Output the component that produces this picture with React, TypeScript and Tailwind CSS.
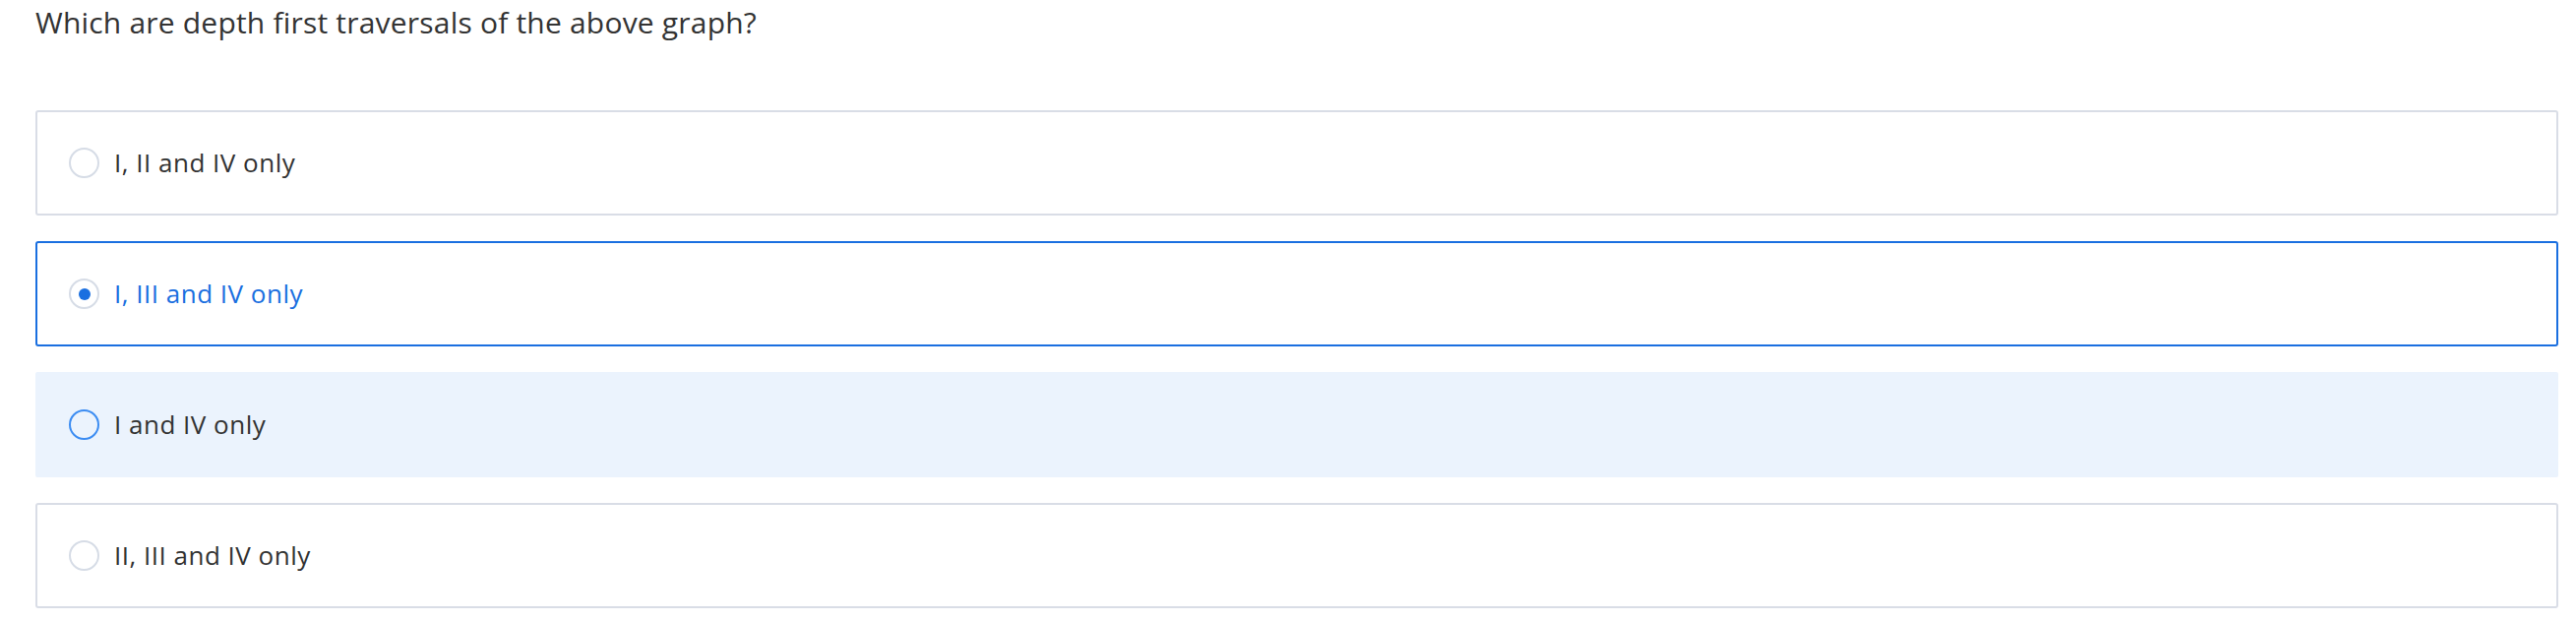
import { useState } from "react";

type Option = { id: number; label: string };

const options: Option[] = [
  { id: 1, label: "I, II and IV only" },
  { id: 2, label: "I, III and IV only" },
  { id: 3, label: "I and IV only" },
  { id: 4, label: "II, III and IV only" },
];

function Radio({ checked, hovered }: { checked: boolean; hovered: boolean }) {
  if (checked) {
    return (
      <span className="flex size-[31px] shrink-0 items-center justify-center rounded-full border-2 border-[#d6dce6] bg-white">
        <span className="size-[12px] rounded-full bg-[#1a6fe0]" />
      </span>
    );
  }
  return (
    <span
      className={
        hovered
          ? "size-[31px] shrink-0 rounded-full border-[2.5px] border-[#3b8cf2] bg-transparent"
          : "size-[31px] shrink-0 rounded-full border-2 border-[#d6dce6] bg-white"
      }
    />
  );
}

export default function App() {
  const [selected, setSelected] = useState(2);
  const hovered = 3;

  return (
    <div className="min-h-[632px] bg-white pl-[36px] pr-[18px] pt-[3px] font-['Open_Sans',sans-serif]">
      <h2 className="text-[30px] leading-[40px] tracking-[0.2px] text-[#333333]">
        Which are depth first traversals of the above graph?
      </h2>
      <div className="mt-[69px] flex flex-col gap-[26px]">
        {options.map((opt) => {
          const checked = opt.id === selected;
          const isHover = opt.id === hovered && !checked;
          return (
            <button
              key={opt.id}
              onClick={() => setSelected(opt.id)}
              className={
                checked
                  ? "flex h-[107px] items-center gap-[15px] rounded-[3px] border-2 border-[#1a6fe0] bg-white pl-[32px] text-left"
                  : isHover
                    ? "flex h-[107px] items-center gap-[15px] rounded-[2px] border-2 border-[#ebf3fd] bg-[#ebf3fd] pl-[32px] text-left"
                    : "flex h-[107px] items-center gap-[15px] rounded-[3px] border-2 border-[#d9dde6] bg-white pl-[32px] text-left"
              }
            >
              <Radio checked={checked} hovered={isHover} />
              <span
                className={
                  checked
                    ? "text-[26px] tracking-[0.5px] text-[#1a6fe0]"
                    : "text-[26px] tracking-[0.5px] text-[#333333]"
                }
              >
                {opt.label}
              </span>
            </button>
          );
        })}
      </div>
    </div>
  );
}
